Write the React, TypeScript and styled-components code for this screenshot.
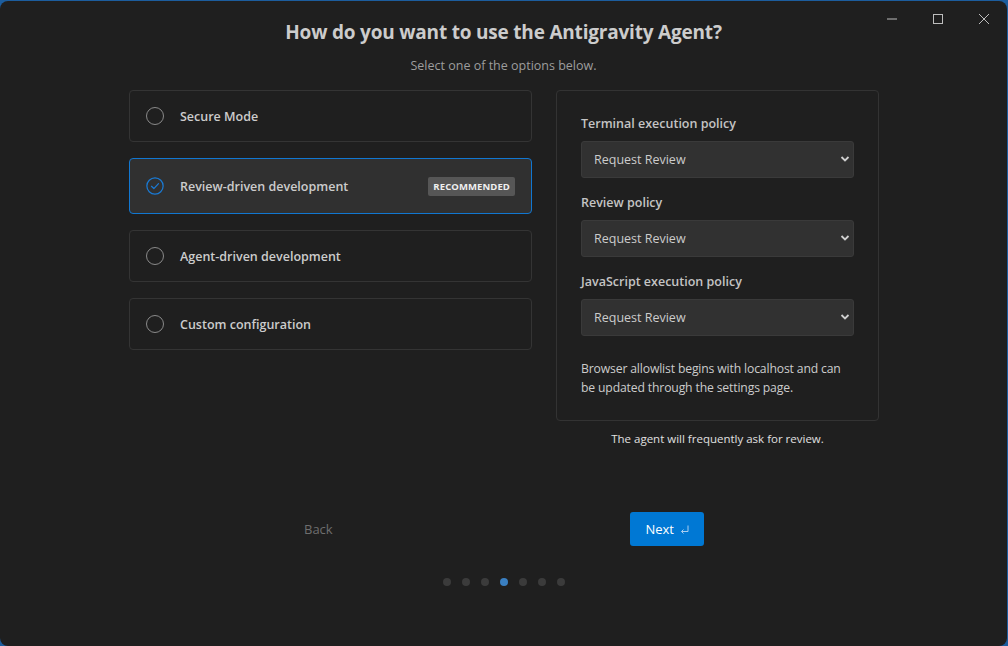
import React, { useState } from 'react';
import styled, { createGlobalStyle } from 'styled-components';

const GlobalStyle = createGlobalStyle`
  html, body {
    margin: 0;
    padding: 0;
    background: #1c5d9e;
  }
  body {
    font-family: 'Open Sans', 'Noto Sans', sans-serif;
  }
  * {
    box-sizing: border-box;
  }
`;

const Frame = styled.div`
  width: 1008px;
  height: 646px;
  padding: 1px 1px 0 0;
  background: #1c5d9e;
`;

const Window = styled.div`
  position: relative;
  height: 100%;
  background: #1f1f1f;
  border-radius: 8px;
  display: flex;
  flex-direction: column;
  align-items: center;
  padding-top: 17px;
`;

const Controls = styled.div`
  position: absolute;
  top: 0;
  right: 0;
  display: flex;
`;

const ControlButton = styled.div`
  width: 46px;
  height: 36px;
  display: flex;
  align-items: center;
  justify-content: center;
  color: #bdbdbd;
`;

const Title = styled.h1`
  margin: 0;
  font-size: 19px;
  font-weight: 700;
  color: #cccccc;
  line-height: 28px;
  letter-spacing: -0.2px;
`;

const Subtitle = styled.p`
  margin: 11px 0 0;
  font-size: 12.5px;
  color: #9d9d9d;
  line-height: 18px;
`;

const Columns = styled.div`
  margin-top: 15px;
  display: flex;
  gap: 24px;
  width: 750px;
  margin-left: 1px;
`;

const OptionList = styled.div`
  width: 403px;
  display: flex;
  flex-direction: column;
  gap: 16px;
`;

const Option = styled.div<{ $selected?: boolean }>`
  display: flex;
  align-items: center;
  gap: 16px;
  padding: 0 16px;
  height: ${(p) => (p.$selected ? '56px' : '52px')};
  border: 1px solid ${(p) => (p.$selected ? '#1177d1' : '#343434')};
  border-radius: 4px;
  background: ${(p) => (p.$selected ? '#303030' : '#1f1f1f')};
  cursor: pointer;
`;

const Radio = styled.div`
  width: 18px;
  height: 18px;
  border-radius: 50%;
  border: 1.5px solid #8a8a8a;
  flex-shrink: 0;
`;

const OptionLabel = styled.span`
  flex: 1;
  font-size: 12.5px;
  font-weight: 600;
  color: #cccccc;
`;

const Badge = styled.span`
  background: #565656;
  color: #f0f0f0;
  font-size: 9.5px;
  font-weight: 700;
  padding: 3px 5px;
  border-radius: 2px;
  letter-spacing: 0.1px;
`;

const RightColumn = styled.div`
  width: 323px;
  display: flex;
  flex-direction: column;
  align-items: center;
`;

const Panel = styled.div`
  width: 100%;
  border: 1px solid #333333;
  border-radius: 4px;
  padding: 24px 24px 23px 24px;
  display: flex;
  flex-direction: column;
`;

const FieldLabel = styled.div`
  font-size: 12.5px;
  font-weight: 600;
  color: #c4c4c4;
  line-height: 18px;
  margin-bottom: 8px;
`;

const SelectWrap = styled.div`
  position: relative;
  width: 273px;
  margin-bottom: 16px;
`;

const Select = styled.select`
  appearance: none;
  width: 100%;
  height: 37px;
  background: #313131;
  border: 1px solid #3a3a3a;
  border-radius: 3px;
  color: #cccccc;
  font-family: 'Open Sans', 'Noto Sans', sans-serif;
  font-size: 12.5px;
  padding: 0 12px;
  outline: none;
`;

const Chevron = styled.svg`
  position: absolute;
  right: 4px;
  top: 14px;
  pointer-events: none;
`;

const Note = styled.p`
  margin: 7px 0 0;
  font-size: 12.2px;
  line-height: 19px;
  letter-spacing: -0.15px;
  color: #cccccc;
`;

const Caption = styled.p`
  margin: 10px 0 0;
  font-size: 11.5px;
  color: #e0e0e0;
`;

const Footer = styled.div`
  margin-top: 66px;
  width: 400px;
  display: flex;
  justify-content: space-between;
  align-items: center;
  margin-left: 1px;
`;

const BackButton = styled.button`
  background: none;
  border: none;
  color: #6e6e6e;
  font-family: 'Open Sans', 'Noto Sans', sans-serif;
  font-size: 13px;
  padding: 0;
  cursor: default;
`;

const NextButton = styled.button`
  display: flex;
  align-items: center;
  gap: 6px;
  background: #0078d4;
  color: #ffffff;
  border: none;
  border-radius: 3px;
  height: 34px;
  padding: 0 15px 0 15px;
  font-family: 'Open Sans', 'Noto Sans', sans-serif;
  font-size: 13px;
  cursor: pointer;
`;

const Dots = styled.div`
  margin-top: 32px;
  display: flex;
  gap: 11px;
  margin-left: 1px;
`;

const Dot = styled.span<{ $active?: boolean }>`
  width: 8px;
  height: 8px;
  border-radius: 50%;
  background: ${(p) => (p.$active ? '#3a7fc1' : '#3b3b3b')};
`;

const CheckIcon = () => (
  <svg width="18" height="18" viewBox="0 0 19 19" fill="none" style={{ flexShrink: 0 }}>
    <circle cx="9.5" cy="9.5" r="8.6" stroke="#1a7ad4" strokeWidth="1.3" />
    <path d="M5.8 9.8l2.5 2.4 4.9-5.2" stroke="#1a7ad4" strokeWidth="1.3" strokeLinecap="round" strokeLinejoin="round" />
  </svg>
);

const options = [
  { id: 'secure', label: 'Secure Mode' },
  { id: 'review', label: 'Review-driven development', badge: 'RECOMMENDED' },
  { id: 'agent', label: 'Agent-driven development' },
  { id: 'custom', label: 'Custom configuration' },
];

const policies = ['Terminal execution policy', 'Review policy', 'JavaScript execution policy'];

const App = () => {
  const [selected, setSelected] = useState('review');

  return (
    <Frame>
      <GlobalStyle />
      <Window>
        <Controls>
          <ControlButton>
            <svg width="10" height="10" viewBox="0 0 10 10">
              <path d="M0 5h10" stroke="#bdbdbd" strokeWidth="1" />
            </svg>
          </ControlButton>
          <ControlButton>
            <svg width="10" height="10" viewBox="0 0 10 10">
              <rect x="0.5" y="0.5" width="9" height="9" fill="none" stroke="#bdbdbd" strokeWidth="1" />
            </svg>
          </ControlButton>
          <ControlButton>
            <svg width="10" height="10" viewBox="0 0 10 10">
              <path d="M0 0l10 10M10 0L0 10" stroke="#bdbdbd" strokeWidth="1" />
            </svg>
          </ControlButton>
        </Controls>

        <Title>How do you want to use the Antigravity Agent?</Title>
        <Subtitle>Select one of the options below.</Subtitle>

        <Columns>
          <OptionList>
            {options.map((o) => (
              <Option key={o.id} $selected={o.id === selected} onClick={() => setSelected(o.id)}>
                {o.id === selected ? <CheckIcon /> : <Radio />}
                <OptionLabel>{o.label}</OptionLabel>
                {o.badge && <Badge>{o.badge}</Badge>}
              </Option>
            ))}
          </OptionList>

          <RightColumn>
            <Panel>
              {policies.map((p) => (
                <div key={p}>
                  <FieldLabel>{p}</FieldLabel>
                  <SelectWrap>
                    <Select defaultValue="request">
                      <option value="request">Request Review</option>
                      <option value="always">Always Proceed</option>
                    </Select>
                    <Chevron width="10" height="8" viewBox="0 0 10 8">
                      <path d="M1.5 2l3.5 3.5L8.5 2" stroke="#d0d0d0" strokeWidth="1.8" fill="none" />
                    </Chevron>
                  </SelectWrap>
                </div>
              ))}
              <Note>Browser allowlist begins with localhost and can be updated through the settings page.</Note>
            </Panel>
            <Caption>The agent will frequently ask for review.</Caption>
          </RightColumn>
        </Columns>

        <Footer>
          <BackButton>Back</BackButton>
          <NextButton>
            Next
            <svg width="9" height="9" viewBox="0 0 9 9" fill="none">
              <path d="M8 0.5v6H1.5M3.5 4.5l-2 2 2 2" stroke="#a9cdf0" strokeWidth="1" />
            </svg>
          </NextButton>
        </Footer>

        <Dots>
          {[0, 1, 2, 3, 4, 5, 6].map((i) => (
            <Dot key={i} $active={i === 3} />
          ))}
        </Dots>
      </Window>
    </Frame>
  );
};

export default App;
